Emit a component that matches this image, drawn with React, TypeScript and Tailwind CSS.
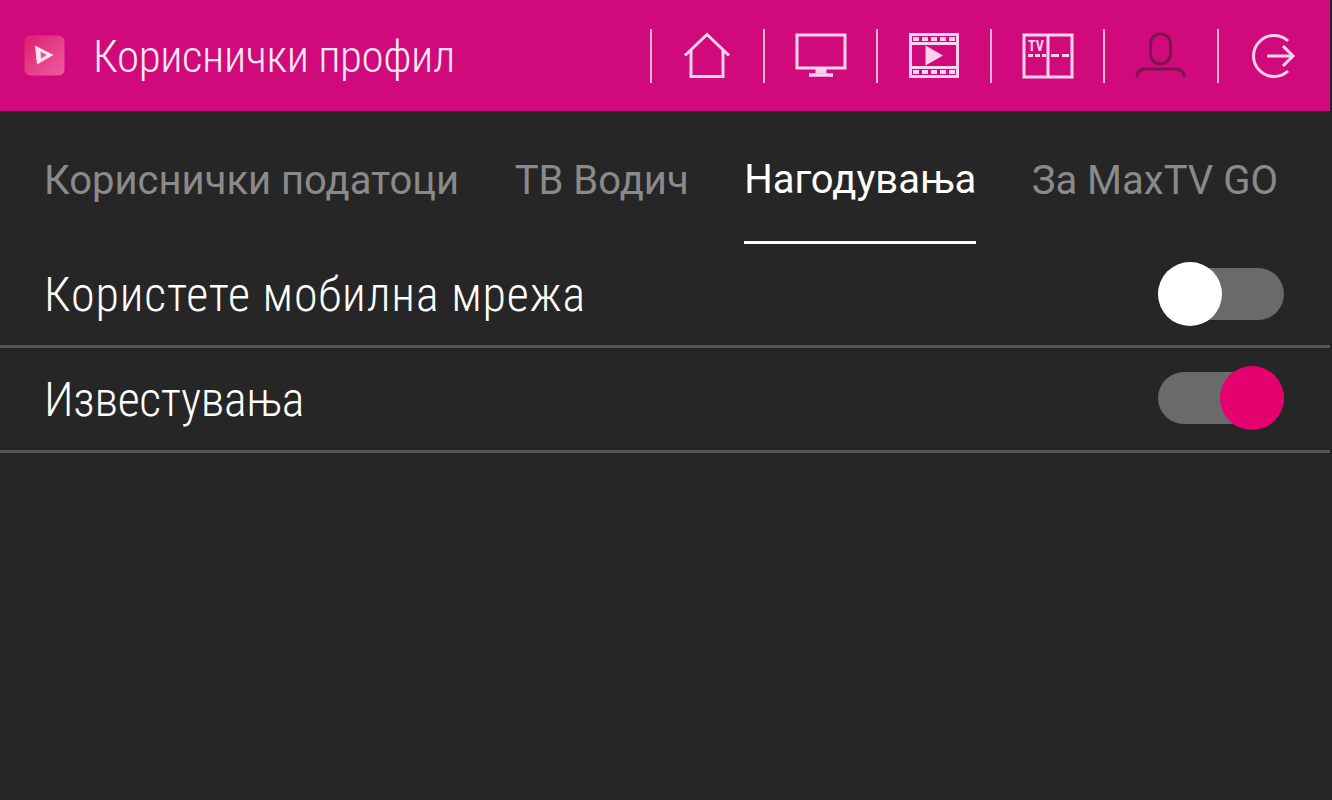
import React from "react";

const NavItem = ({ children }: { children: React.ReactNode }) => (
  <div className="flex h-[54px] w-[113.4px] items-center justify-center border-l-2 border-[#f6b3da]">{children}</div>
);

const Toggle = ({ on }: { on: boolean }) => (
  <div className={`flex h-[52px] w-[126px] items-center rounded-full bg-[#6a6a6a] ${on ? "justify-end" : "justify-start"}`}>
    <div className={`h-16 w-16 shrink-0 rounded-full ${on ? "bg-[#e6006f]" : "bg-white"}`} />
  </div>
);

const iconColor = "#fcd2ec";

export default function App() {
  return (
    <div className="h-[800px] w-[1332px] overflow-hidden bg-[#262626] font-['Roboto',sans-serif]">
      <div className="w-[1330px]">
        <header className="flex h-[111px] items-center bg-[#d00a7b] pl-6 pr-0">
          <svg width="41" height="41" viewBox="0 0 41 41" className="shrink-0">
            <defs>
              <linearGradient id="lg" x1="0" y1="0" x2="1" y2="1">
                <stop offset="0" stopColor="#dd1f6f" />
                <stop offset="1" stopColor="#ee5c9f" />
              </linearGradient>
            </defs>
            <rect x="0.5" y="0.5" width="40" height="40" rx="6" fill="url(#lg)" />
            <path d="M11 10.5 L29.5 20 L13 29.5 Z" fill="#fde4f1" />
            <path d="M16.5 16.5 L23 20 L17 23.5 Z" fill="#e8529a" />
          </svg>
          <div className="ml-[28px] whitespace-nowrap pt-[1px] text-[45px] font-light leading-none tracking-[-0.4px] text-[#fdeaf6] [font-stretch:75%]">Кориснички профил</div>
          <nav className="ml-auto flex items-center">
            <NavItem>
              <svg width="48" height="48" viewBox="0 0 48 48" fill="none" stroke={iconColor} strokeWidth="3">
                <path d="M2 23.5 L24 2.5 L46 23.5" />
                <path d="M8 18 V44.5 H40 V18" />
              </svg>
            </NavItem>
            <NavItem>
              <svg width="52" height="46" viewBox="0 0 52 46" fill="none" stroke={iconColor} strokeWidth="3">
                <rect x="2" y="2" width="48" height="33" />
                <path d="M22 36 H30 V39 H22 Z" fill={iconColor} />
                <path d="M14 42 H38" strokeWidth="3.5" />
              </svg>
            </NavItem>
            <NavItem>
              <svg width="50" height="46" viewBox="0 0 50 46" fill="none" stroke={iconColor} strokeWidth="3">
                <rect x="1.5" y="1.5" width="47" height="42" />
                <path d="M1.5 10.5 H48.5 M1.5 34.5 H48.5" />
                <path d="M4 6 H47 M4 39 H47" strokeWidth="4" strokeDasharray="6 3" />
                <path d="M16.5 12.5 L34 22.5 L16.5 32.5 Z" fill={iconColor} stroke="none" />
              </svg>
            </NavItem>
            <NavItem>
              <svg width="52" height="46" viewBox="0 0 52 46" fill="none" stroke={iconColor} strokeWidth="3">
                <rect x="2" y="2" width="48" height="42" />
                <path d="M26 2 V44" />
                <path d="M6 22.5 H24" strokeDasharray="5 2" />
                <path d="M29 22.5 H47" strokeDasharray="8 3" />
                <text x="6" y="17.5" fontFamily="Roboto, sans-serif" fontWeight="700" fontSize="14" fill={iconColor} stroke="none" className="[font-stretch:75%]">TV</text>
              </svg>
            </NavItem>
            <NavItem>
              <svg width="52" height="48" viewBox="0 0 52 48" fill="none" stroke="#7c1352" strokeWidth="3">
                <rect x="15.5" y="2" width="20" height="30" rx="10" />
                <path d="M2 45 C2 39 5 37 10 37 H40 C46 37 49 39 49 45" />
              </svg>
            </NavItem>
            <NavItem>
              <svg width="46" height="46" viewBox="0 0 46 46" fill="none" stroke={iconColor} strokeWidth="3">
                <path d="M37 8 A20.5 20.5 0 1 0 37 38" />
                <path d="M16 23 H42 M32 13 L42 23 L32 33" />
              </svg>
            </NavItem>
          </nav>
        </header>

        <div className="flex h-[133px] gap-[55.5px] pl-[44px] text-[40px] leading-none text-[#8a8a8a]">
          <div className="flex h-[133px] items-center whitespace-nowrap pt-[7px]">Кориснички податоци</div>
          <div className="flex h-[133px] items-center whitespace-nowrap pt-[7px]">ТВ Водич</div>
          <div className="flex h-[133px] items-center whitespace-nowrap border-b-[3px] border-white pt-[7px] text-white">Нагодувања</div>
          <div className="flex h-[133px] items-center whitespace-nowrap pt-[7px]">За MaxTV GO</div>
        </div>

        <div className="flex h-[104px] items-center justify-between border-b-[3px] border-[#555555] pb-[2px] pl-[44px] pr-[46px]">
          <span className="pt-[2px] text-[48px] font-light leading-none tracking-[0.9px] text-white [font-stretch:75%]">Користете мобилна мрежа</span>
          <Toggle on={false} />
        </div>
        <div className="flex h-[105px] items-center justify-between border-b-[3px] border-[#555555] pb-[2px] pl-[44px] pr-[46px]">
          <span className="pt-[4px] text-[48px] font-light leading-none tracking-[-0.3px] text-white [font-stretch:75%]">Известувања</span>
          <Toggle on={true} />
        </div>
      </div>
    </div>
  );
}
